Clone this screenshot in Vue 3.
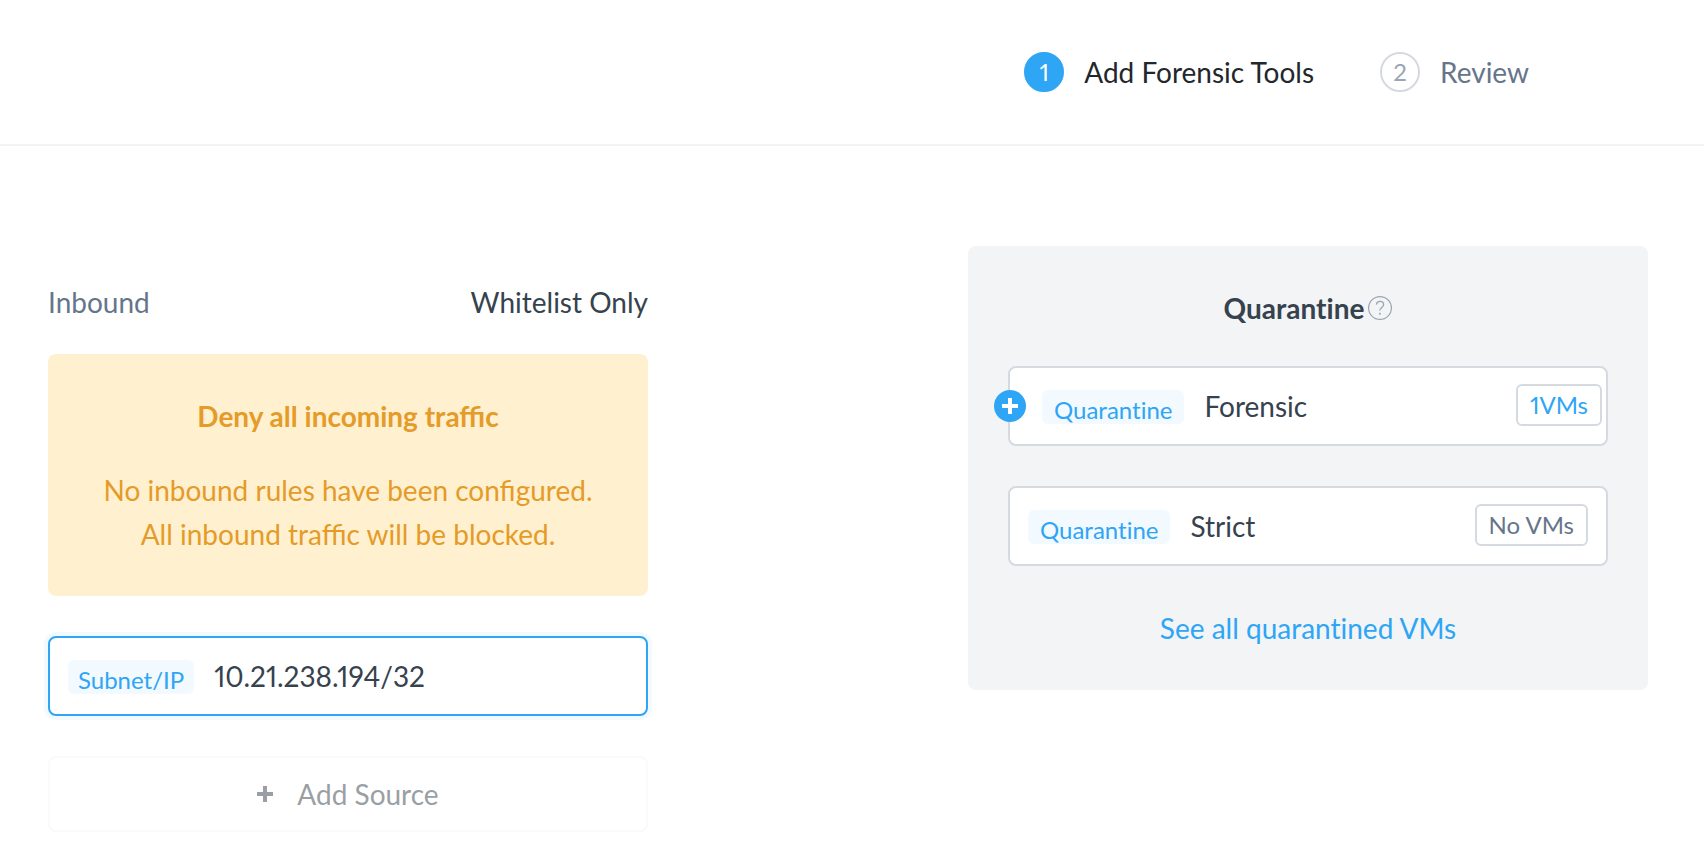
<script setup>
import { ref } from 'vue'

const source = ref('10.21.238.194/32')
const steps = [
  { number: 1, label: 'Add Forensic Tools', active: true },
  { number: 2, label: 'Review', active: false }
]
</script>

<template>
  <div class="page">
    <header class="header">
      <ol class="steps">
        <li v-for="step in steps" :key="step.number" class="step" :class="{ active: step.active }">
          <span class="step-number">{{ step.number }}</span>
          <span class="step-label">{{ step.label }}</span>
        </li>
      </ol>
    </header>

    <main class="content">
      <section class="inbound">
        <div class="inbound-head">
          <span class="muted">Inbound</span>
          <span>Whitelist Only</span>
        </div>

        <div class="notice">
          <h2 class="notice-title">Deny all incoming traffic</h2>
          <p class="notice-text">No inbound rules have been configured.<br />All inbound traffic will be blocked.</p>
        </div>

        <div class="box source">
          <label class="tag" for="subnet">Subnet/IP</label>
          <input id="subnet" v-model="source" class="source-input" type="text" />
        </div>

        <button class="add" type="button">
          <svg class="add-icon" viewBox="0 0 16 16" aria-hidden="true">
            <path d="M6 0h4v6h6v4h-6v6H6v-6H0V6h6z" fill="currentColor" />
          </svg>
          <span>Add Source</span>
        </button>
      </section>

      <section class="panel">
        <div class="panel-head">
          <h2 class="panel-title">Quarantine</h2>
          <button class="help" type="button" aria-label="Help">
            <svg viewBox="0 0 24 24" fill="none" stroke="currentColor" aria-hidden="true">
              <circle cx="12" cy="12" r="11.4" stroke-width="1.2" />
              <path d="M8.4 8.6C8.7 6.6 10.1 5.4 12 5.4c2.1 0 3.6 1.3 3.6 3.1 0 3.1-3.7 2.9-3.7 6.1" stroke-width="1.3" />
              <circle cx="11.9" cy="17.7" r="1" fill="currentColor" stroke="none" />
            </svg>
          </button>
        </div>

        <div class="box row attached">
          <button class="plus" type="button" aria-label="Add">
            <svg viewBox="0 0 16 16" aria-hidden="true">
              <path d="M6 0h4v6h6v4h-6v6H6v-6H0V6h6z" fill="currentColor" />
            </svg>
          </button>
          <span class="tag">Quarantine</span>
          <span class="name">Forensic</span>
          <button class="badge link" type="button">1VMs</button>
        </div>

        <div class="box row">
          <span class="tag">Quarantine</span>
          <span class="name">Strict</span>
          <span class="badge">No VMs</span>
        </div>

        <a class="see-all" href="#">See all quarantined VMs</a>
      </section>
    </main>
  </div>
</template>

<style>
body {
  margin: 0;
  background: #fff;
}
</style>

<style scoped>
.page {
  box-sizing: border-box;
  font-family: Lato, "Open Sans", sans-serif;
  font-size: 28px;
  font-variant-numeric: proportional-nums;
  line-height: 44px;
  color: #36424e;
}

.page *,
.page *::before {
  box-sizing: border-box;
}

button,
input {
  margin: 0;
  padding: 0;
  border: 0;
  background: none;
  color: inherit;
  font: inherit;
  font-variant-numeric: proportional-nums;
}

button {
  cursor: pointer;
}

h2,
p {
  margin: 0;
}

svg {
  display: block;
}

.header {
  display: flex;
  justify-content: flex-end;
  padding: 50px 175px 50px 48px;
  border-bottom: 2px solid #f2f3f5;
}

.steps {
  display: flex;
  gap: 66px;
  margin: 0;
  padding: 0;
  list-style: none;
}

.step {
  display: flex;
  align-items: center;
  gap: 20px;
  color: #66758a;
}

.step-number {
  display: flex;
  align-items: center;
  justify-content: center;
  width: 40px;
  height: 40px;
  border: 2px solid #d5d9e0;
  border-radius: 50%;
  color: #9aa5b5;
  font-size: 24px;
  line-height: 36px;
}

.active {
  color: #22272e;
}

.active .step-number {
  border-color: #2ea5f5;
  background: #2ea5f5;
  color: #fff;
}

.content {
  display: flex;
  align-items: flex-start;
  justify-content: space-between;
  gap: 48px;
  padding: 100px 56px 24px 48px;
}

.inbound {
  display: flex;
  flex: 0 1 600px;
  flex-direction: column;
  padding-top: 34px;
}

.inbound-head {
  display: flex;
  justify-content: space-between;
  margin-bottom: 30px;
}

.muted {
  color: #66758a;
}

.notice {
  padding: 40px 24px;
  margin-bottom: 40px;
  border-radius: 8px;
  background: #fff0d0;
  color: #e59b27;
  text-align: center;
}

.notice-title {
  margin-bottom: 30px;
  font-size: 28px;
  font-weight: 700;
}

.box {
  display: flex;
  align-items: center;
  height: 80px;
  padding: 0 18px;
  border: 2px solid #d5d9e0;
  border-radius: 8px;
  background: #fff;
}

.source {
  margin-bottom: 40px;
  border-color: #2ea5f5;
  box-shadow: 0 0 0 4px #f2faff;
}

.tag {
  flex: none;
  height: 34px;
  margin: 2px 20px 0 0;
  padding: 6px 10px 0;
  border-radius: 6px;
  background: #f2faff;
  color: #2ea5f5;
  font-size: 24px;
  line-height: 28px;
}

.source-input {
  flex: 1;
  min-width: 0;
  outline: 0;
}

.add {
  display: flex;
  align-items: center;
  justify-content: center;
  gap: 24px;
  padding: 14px 24px;
  border: 2px solid #fafafb;
  border-radius: 8px;
  color: #9a9fa4;
}

.add-icon {
  width: 16px;
  height: 16px;
}

.panel {
  display: flex;
  flex: 0 1 680px;
  flex-direction: column;
  padding: 40px;
  border-radius: 8px;
  background: #f2f4f6;
  font-variant-ligatures: no-common-ligatures;
}

.panel-head {
  display: flex;
  align-items: center;
  justify-content: center;
  gap: 4px;
  margin-bottom: 36px;
}

.panel-title {
  font-size: 28px;
  font-weight: 700;
}

.help {
  width: 24px;
  height: 24px;
  color: #9aa5b5;
}

.row {
  position: relative;
  margin-bottom: 40px;
}

.row .tag {
  padding: 6px 12px 0;
}

.attached {
  padding: 0 4px 0 32px;
}

.plus {
  position: absolute;
  top: 22px;
  left: -16px;
  width: 32px;
  height: 32px;
  padding: 8px;
  border-radius: 50%;
  background: #2ea5f5;
  color: #fff;
}

.name {
  flex: 1;
}

.badge {
  flex: none;
  margin-bottom: 2px;
  padding: 0 12px;
  border: 2px solid #d5d9e0;
  border-radius: 6px;
  color: #66758a;
  font-size: 24px;
  line-height: 38px;
}

.link {
  color: #2ea5f5;
}

.see-all {
  align-self: center;
  color: #2ea5f5;
  text-decoration: none;
}
</style>
